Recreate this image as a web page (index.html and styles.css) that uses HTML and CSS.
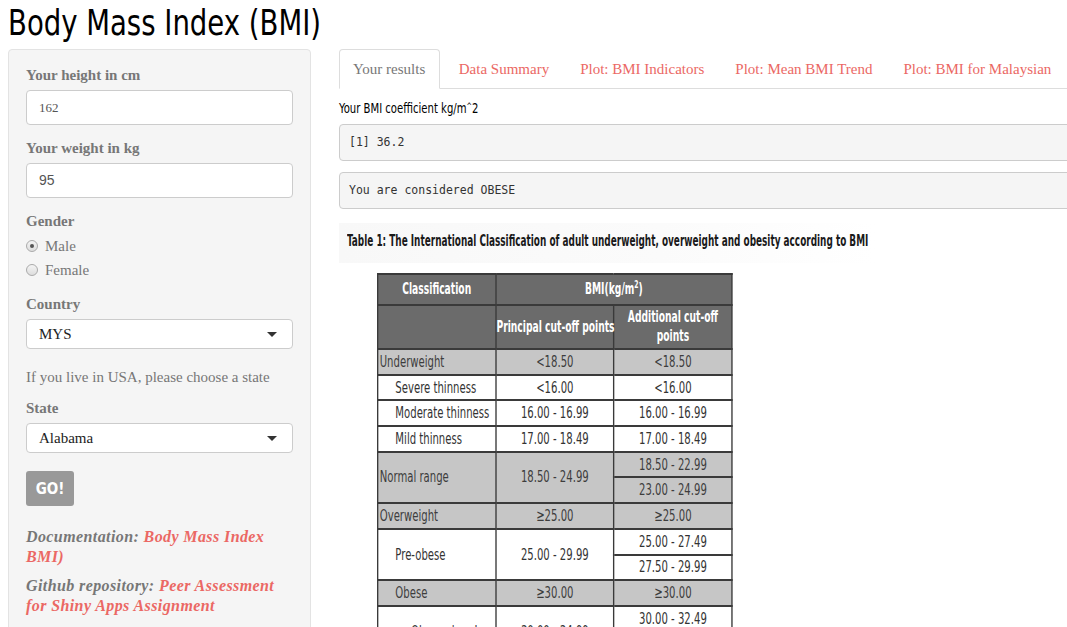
FILE: index.html
```html
<!DOCTYPE html>
<html lang="en">
<head>
<meta charset="utf-8">
<title>Body Mass Index (BMI)</title>
<link rel="stylesheet" href="styles.css">
</head>
<body>
<h1 class="title">Body Mass Index (BMI)</h1>
<div class="layout">
  <aside class="well">
    <div class="group">
      <div class="lbl">Your height in cm</div>
      <div class="field">162</div>
    </div>
    <div class="group">
      <div class="lbl">Your weight in kg</div>
      <div class="field field-lining">95</div>
    </div>
    <div class="group group-radio">
      <div class="lbl lbl-tight">Gender</div>
      <div class="radio"><span class="dot checked"></span>Male</div>
      <div class="radio"><span class="dot"></span>Female</div>
    </div>
    <div class="group">
      <div class="lbl">Country</div>
      <div class="select">MYS<span class="caret"></span></div>
    </div>
    <p class="help">If you live in USA, please choose a state</p>
    <div class="group">
      <div class="lbl">State</div>
      <div class="select">Alabama<span class="caret"></span></div>
    </div>
    <button class="btn">GO!</button>
    <p class="note">Documentation: <a href="#">Body Mass Index<br>BMI)</a></p>
    <p class="note">Github repository: <a href="#">Peer Assessment<br>for Shiny Apps Assignment</a></p>
  </aside>
  <main class="main">
    <ul class="tabs">
      <li class="tab active">Your results</li>
      <li class="tab">Data Summary</li>
      <li class="tab">Plot: BMI Indicators</li>
      <li class="tab">Plot: Mean BMI Trend</li>
      <li class="tab">Plot: BMI for Malaysian</li>
    </ul>
    <div class="coef">Your BMI coefficient kg/m<span class="hat">^</span>2</div>
    <pre class="out">[1] 36.2</pre>
    <pre class="out out2">You are considered OBESE</pre>
    <div class="figure">
      <div class="fig-title"><span class="fig-text">Table 1: The International Classification of adult underweight, overweight and obesity according to BMI</span></div>
      <table class="bmi">
        <colgroup><col class="col"><col class="col"><col class="col"></colgroup>
        <tr class="h1">
          <th>Classification</th>
          <th colspan="2">BMI(kg/m<sup>2</sup>)</th>
        </tr>
        <tr class="h2">
          <th></th>
          <th>Principal cut-off points</th>
          <th>Additional cut-off<br>points</th>
        </tr>
        <tr class="g">
          <td class="c">Underweight</td><td>&lt;18.50</td><td>&lt;18.50</td>
        </tr>
        <tr>
          <td class="c i1">Severe thinness</td><td>&lt;16.00</td><td>&lt;16.00</td>
        </tr>
        <tr>
          <td class="c i1">Moderate thinness</td><td>16.00 - 16.99</td><td>16.00 - 16.99</td>
        </tr>
        <tr>
          <td class="c i1">Mild thinness</td><td>17.00 - 18.49</td><td>17.00 - 18.49</td>
        </tr>
        <tr class="g">
          <td class="c" rowspan="2">Normal range</td><td rowspan="2">18.50 - 24.99</td><td>18.50 - 22.99</td>
        </tr>
        <tr class="g">
          <td>23.00 - 24.99</td>
        </tr>
        <tr class="g">
          <td class="c">Overweight</td><td>&ge;25.00</td><td>&ge;25.00</td>
        </tr>
        <tr>
          <td class="c i1" rowspan="2">Pre-obese</td><td rowspan="2">25.00 - 29.99</td><td>25.00 - 27.49</td>
        </tr>
        <tr>
          <td>27.50 - 29.99</td>
        </tr>
        <tr class="g">
          <td class="c i1">Obese</td><td>&ge;30.00</td><td>&ge;30.00</td>
        </tr>
        <tr>
          <td class="c i2" rowspan="2">Obese class I</td><td rowspan="2">30.00 - 34.99</td><td>30.00 - 32.49</td>
        </tr>
        <tr>
          <td>32.50 - 34.99</td>
        </tr>
      </table>
    </div>
  </main>
</div>
</body>
</html>
```
FILE: styles.css
```css
html, body {
  margin: 0;
  padding: 0;
  overflow: hidden;
  background: #fff;
}
body {
  font-family: "Liberation Serif", "DejaVu Serif", serif;
  font-size: 15px;
  color: #777;
}
.title {
  margin: 0 0 0 8px;
  padding-top: 3px;
  height: 46px;
  font-family: "DejaVu Sans Condensed", "DejaVu Sans", sans-serif;
  font-stretch: condensed;
  font-weight: 400;
  font-size: 36px;
  line-height: 40px;
  color: #000;
  white-space: nowrap;
  transform: scaleX(0.85);
  transform-origin: left center;
}
.layout {
  display: flex;
  align-items: flex-start;
}
.well {
  flex: none;
  width: 267px;
  margin-left: 8px;
  padding: 15px 17px 40px 17px;
  background: #f5f5f5;
  border: 1px solid #e3e3e3;
  border-radius: 4px;
  min-height: 600px;
}
.group {
  margin-bottom: 13px;
}
.group-radio {
  margin-bottom: 12px;
}
.lbl {
  font-weight: 700;
  font-size: 15px;
  line-height: 21px;
  margin-bottom: 4px;
  color: #777;
}
.lbl-tight {
  margin-bottom: 2px;
}
.field {
  box-sizing: border-box;
  height: 35px;
  padding: 0 12px;
  line-height: 33px;
  background: #fff;
  border: 1px solid #ccc;
  border-radius: 4px;
  font-size: 13px;
  color: #555;
}
.field-lining {
  font-family: "Liberation Sans", sans-serif;
  font-size: 14px;
}
.radio {
  display: flex;
  align-items: center;
  height: 24px;
  font-size: 15px;
  color: #777;
}
.dot {
  box-sizing: border-box;
  width: 12px;
  height: 12px;
  margin-right: 7px;
  border: 1px solid #aaa;
  border-radius: 50%;
  background: linear-gradient(#f4f4f4, #ddd);
  position: relative;
}
.dot.checked::after {
  content: "";
  position: absolute;
  left: 3px;
  top: 3px;
  width: 4px;
  height: 4px;
  border-radius: 50%;
  background: #555;
}
.select {
  box-sizing: border-box;
  height: 30px;
  padding: 0 12px;
  line-height: 28px;
  background: #fff;
  border: 1px solid #ccc;
  border-radius: 4px;
  font-size: 15px;
  color: #222;
  display: flex;
  justify-content: space-between;
  align-items: center;
}
.caret {
  width: 0;
  height: 0;
  margin-right: 3px;
  border-left: 5px solid transparent;
  border-right: 5px solid transparent;
  border-top: 5px solid #333;
}
.help {
  margin: 18px 0 10px 0;
  line-height: 21px;
  font-size: 15px;
  color: #777;
}
.btn {
  display: block;
  width: 48px;
  height: 35px;
  margin: 18px 0 21px 0;
  padding: 0;
  border: none;
  border-radius: 3px;
  background: #999;
  color: #fff;
  font-family: "DejaVu Sans Condensed", "DejaVu Sans", sans-serif;
  font-weight: 700;
  font-size: 15px;
}
.note {
  margin: 0 0 9px 0;
  font-style: italic;
  font-weight: 700;
  font-size: 16px;
  letter-spacing: 0.4px;
  line-height: 20px;
  color: #777;
  white-space: nowrap;
}
.note a {
  color: #eb6864;
  text-decoration: none;
}
.main {
  flex: none;
  width: 760px;
  margin-left: 28px;
}
.tabs {
  display: flex;
  margin: 0;
  padding: 0;
  list-style: none;
  border-bottom: 1px solid #ddd;
  height: 39px;
}
.tab {
  box-sizing: border-box;
  height: 40px;
  padding: 0 13.5px;
  margin-right: 2px;
  line-height: 38px;
  font-size: 15px;
  color: #eb6864;
  border: 1px solid transparent;
  border-radius: 4px 4px 0 0;
  white-space: nowrap;
}
.tab.active {
  padding: 0 14px 0 13px;
  margin-right: 4px;
  color: #777;
  background: #fff;
  border-color: #ddd #ddd transparent #ddd;
}
.coef {
  margin-top: 8px;
  font-family: "DejaVu Sans Condensed", "DejaVu Sans", sans-serif;
  font-size: 14px;
  line-height: 18px;
  color: #000;
  white-space: nowrap;
  transform: scaleX(0.8);
  transform-origin: left center;
}
.hat {
  font-size: 9px;
  vertical-align: 4px;
}
.out {
  box-sizing: border-box;
  height: 37px;
  margin: 7px 0 0 0;
  padding: 0 9px;
  line-height: 35px;
  background: #f5f5f5;
  border: 1px solid #ccc;
  border-radius: 4px;
  font-family: "DejaVu Sans Mono", "Liberation Mono", monospace;
  font-size: 11.5px;
  color: #333;
}
.out2 {
  margin-top: 11px;
}
.figure {
  margin-top: 14px;
  width: 536px;
}
.fig-title {
  height: 40px;
  padding-left: 8px;
  line-height: 37px;
  background: linear-gradient(to right, #f8f8f8, #fbfbfb 60%, #fff);
}
.fig-text {
  display: inline-block;
  white-space: nowrap;
  font-family: "DejaVu Sans Condensed", "DejaVu Sans", sans-serif;
  font-weight: 700;
  font-size: 15px;
  color: #1a1a1a;
  transform: scaleX(0.66);
  transform-origin: left center;
}
.bmi {
  margin: 10px 0 0 38px;
  width: 523px;
  table-layout: fixed;
  border-collapse: collapse;
  border: 2px solid #3a3a3a;
  font-family: "DejaVu Sans Condensed", "DejaVu Sans", sans-serif;
  font-size: 16.5px;
  color: #333;
  transform: scaleX(0.68);
  transform-origin: left top;
}
.bmi .col {
  width: 33.333%;
}
.bmi th, .bmi td {
  border: 2px solid #3a3a3a;
  padding: 0;
  text-align: center;
  white-space: nowrap;
}
.bmi th {
  background: #6b6b6b;
  color: #fff;
  font-weight: 700;
  font-size: 15px;
  line-height: 19px;
}
.bmi .h1 th {
  height: 29px;
}
.bmi .h2 th {
  height: 42px;
}
.bmi sup {
  font-size: 10px;
  line-height: 0;
}
.bmi td {
  height: 23.7px;
  line-height: 20px;
  background: #fff;
}
.bmi tr.g td {
  background: #c6c6c6;
  color: #3d3d3d;
}
.bmi td.c {
  text-align: left;
  padding-left: 2px;
}
.bmi td.i1 {
  padding-left: 25px;
}
.bmi td.i2 {
  padding-left: 48px;
}
```
